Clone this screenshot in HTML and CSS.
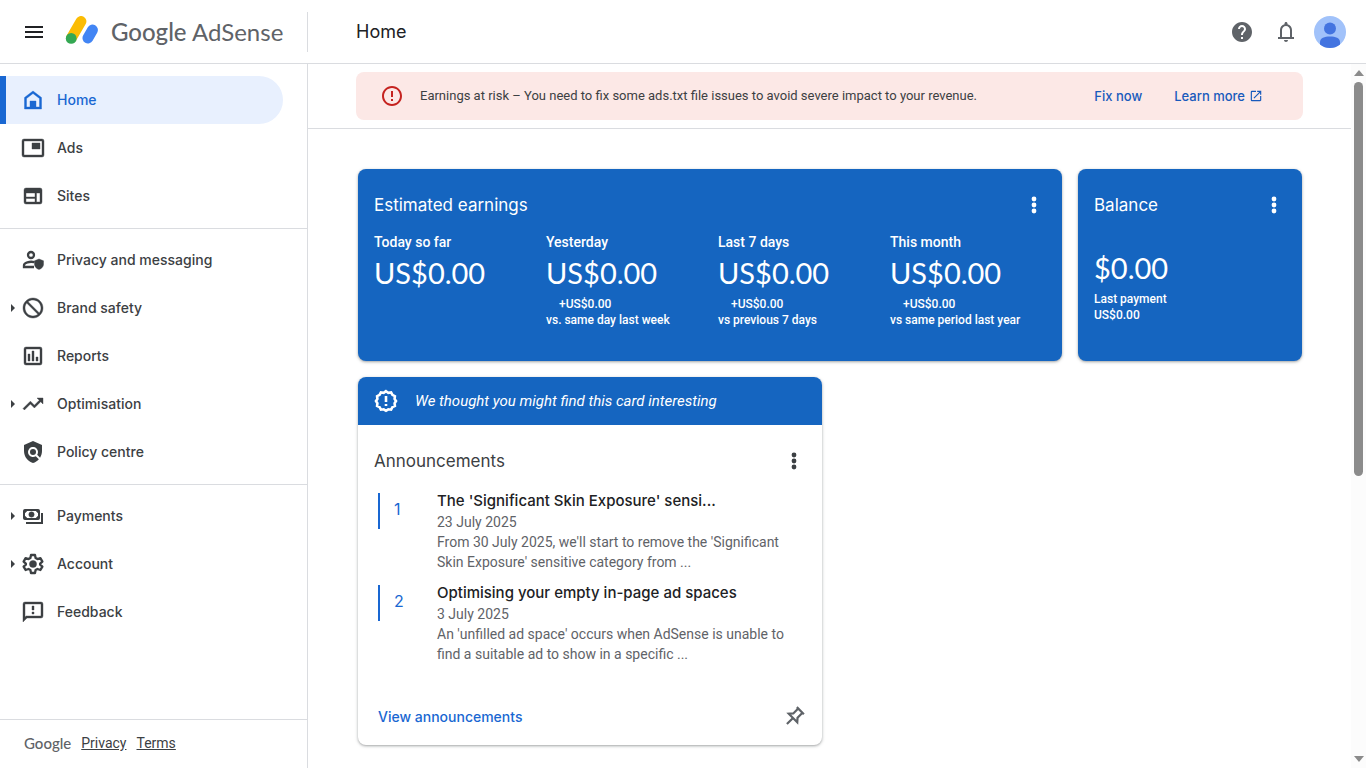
FILE: index.html
```html
<!DOCTYPE html>
<html lang="en-GB">
<head>
<meta charset="utf-8">
<meta name="viewport" content="width=device-width, initial-scale=1">
<title>Google AdSense</title>
<link rel="stylesheet" href="styles.css">
</head>
<body class="app">
<header class="topbar">
  <div class="brand">
    <button class="icon-button" type="button" aria-label="Main menu">
      <svg class="icon" viewBox="0 0 24 24"><path d="M3 6h18v2H3zM3 11h18v2H3zM3 16h18v2H3z"/></svg>
    </button>
    <a class="logo" href="#">
      <svg class="logo-mark" viewBox="0 0 35 32" fill="none" stroke-linecap="round" stroke-width="10.8">
        <path stroke="#fbbc04" d="M17 5.400L7.600 21.600"/>
        <path stroke="#4285f4" d="M28.500 14L23.900 22"/>
        <circle cx="7.200" cy="22.400" r="5.400" fill="#34a853"/>
      </svg>
      <span class="logo-text"><span class="logo-google">Google</span> AdSense</span>
    </a>
  </div>
  <h1 class="page-title">Home</h1>
  <div class="actions">
    <button class="icon-button" type="button" aria-label="Help">
      <svg class="icon" viewBox="0 0 24 24"><path d="M12 2C6.48 2 2 6.48 2 12s4.48 10 10 10 10-4.48 10-10S17.52 2 12 2zm1 17h-2v-2h2v2zm2.07-7.75l-.9.92C13.45 12.9 13 13.5 13 15h-2v-.5c0-1.1.45-2.1 1.17-2.83l1.24-1.26c.37-.36.59-.86.59-1.41 0-1.1-.9-2-2-2s-2 .9-2 2H8c0-2.21 1.79-4 4-4s4 1.79 4 4c0 .88-.36 1.68-.93 2.25z"/></svg>
    </button>
    <button class="icon-button" type="button" aria-label="Notifications">
      <svg class="icon" viewBox="0 0 24 24"><path d="M12 22c1.1 0 2-.9 2-2h-4c0 1.1.9 2 2 2zM18 17v-7c0-2.79-1.91-5.14-4.5-5.8V3.500C13.500 2.670 12.830 2 12 2s-1.500.67-1.500 1.500v.7C7.910 4.860 6 7.210 6 10v7H4v2h16v-2h-2zm-2 0H8v-7c0-2.210 1.790-4 4-4s4 1.790 4 4v7z"/></svg>
    </button>
    <button class="avatar-button" type="button" aria-label="Account profile">
      <svg class="avatar" viewBox="0 0 32 32"><circle cx="16" cy="16" r="16" fill="#a1c2fa"/><circle cx="16" cy="12.500" r="6" fill="#4374e0"/><path fill="#4374e0" d="M6 28.400V26c0-4 4.500-5.600 10-5.600S26 22 26 26v2.400A16 16 0 0 1 6 28.400z"/></svg>
    </button>
  </div>
</header>

<div class="body">
  <aside class="sidebar">
    <nav class="nav" aria-label="Main">
      <ul class="nav-group">
        <li><a class="nav-item nav-item-active" href="#"><span class="caret"></span><svg class="icon" viewBox="0 0 24 24"><path fill-rule="evenodd" d="M12 3l8.500 6.500V21h-17V9.500zM12 5.500L5.500 10.500V19h13v-8.500z"/><path d="M9 13h6v7H9z"/></svg>Home</a></li>
        <li><a class="nav-item" href="#"><span class="caret"></span><svg class="icon" viewBox="0 0 24 24"><path fill-rule="evenodd" d="M3 3h18a2 2 0 0 1 2 2v14a2 2 0 0 1-2 2H3a2 2 0 0 1-2-2V5a2 2 0 0 1 2-2zm0 2v14h18V5zM11 7h8v6h-8z"/></svg>Ads</a></li>
        <li><a class="nav-item" href="#"><span class="caret"></span><svg class="icon" viewBox="0 0 24 24"><path fill-rule="evenodd" d="M5 4h14a2 2 0 0 1 2 2v12a2 2 0 0 1-2 2H5a2 2 0 0 1-2-2V6a2 2 0 0 1 2-2zM5 9v4h9V9zm0 5.500V18h9v-3.500zM15.500 9v9H19V9z"/></svg>Sites</a></li>
      </ul>
      <ul class="nav-group">
        <li><a class="nav-item" href="#"><span class="caret"></span><svg class="icon" viewBox="0 0 24 24"><g fill="none" stroke="currentColor" stroke-width="2.300"><circle cx="10" cy="7" r="3"/><path d="M13.500 14.200C8.500 12.900 3 14.800 3 17.300V19h10"/></g><path d="M18 11l4.500 1.800v3.400c0 2.500-1.900 4.500-4.500 5.300-2.600-.8-4.500-2.800-4.500-5.300v-3.400z"/></svg>Privacy and messaging</a></li>
        <li><a class="nav-item" href="#"><span class="caret caret-shown"></span><svg class="icon" viewBox="0 0 24 24"><path d="M12 2C6.480 2 2 6.480 2 12s4.480 10 10 10 10-4.480 10-10S17.520 2 12 2zm0 18c-4.420 0-8-3.580-8-8 0-1.850.63-3.550 1.690-4.900L16.900 18.310C15.550 19.370 13.850 20 12 20zm6.310-3.100L7.100 5.690C8.450 4.630 10.150 4 12 4c4.420 0 8 3.580 8 8 0 1.850-.63 3.550-1.690 4.900z"/></svg>Brand safety</a></li>
        <li><a class="nav-item" href="#"><span class="caret"></span><svg class="icon" viewBox="0 0 24 24"><path fill-rule="evenodd" d="M5 3h14a2 2 0 0 1 2 2v14a2 2 0 0 1-2 2H5a2 2 0 0 1-2-2V5a2 2 0 0 1 2-2zm0 2v14h14V5zM7 10h2v7H7zM11 7h2v10h-2zM15 13h2v4h-2z"/></svg>Reports</a></li>
        <li><a class="nav-item" href="#"><span class="caret caret-shown"></span><svg class="icon" viewBox="0 0 24 24"><path d="M16 6l2.290 2.290-4.880 4.880-4-4L2 16.590 3.410 18l6-6 4 4 6.300-6.290L22 12V6z"/></svg>Optimisation</a></li>
        <li><a class="nav-item" href="#"><span class="caret"></span><svg class="icon icon-solid" viewBox="0 0 24 24"><path d="M21 5l-9-4-9 4v6c0 5.550 3.840 10.740 9 12 2.300-.56 4.330-1.900 5.880-3.710l-3.120-3.120c-1.940 1.290-4.580 1.070-6.290-.64-1.950-1.950-1.950-5.120 0-7.070 1.950-1.950 5.120-1.950 7.070 0 1.710 1.710 1.920 4.350.64 6.290l2.900 2.900C20.290 15.690 21 13.380 21 11V5z"/><circle cx="12" cy="12" r="3"/></svg>Policy centre</a></li>
      </ul>
      <ul class="nav-group">
        <li><a class="nav-item" href="#"><span class="caret caret-shown"></span><svg class="icon" viewBox="0 0 24 24"><g fill="none" stroke="currentColor" stroke-width="2"><rect x="3" y="6" width="15" height="9" rx="1"/><path d="M5 19h16V9"/></g><circle cx="10.500" cy="10.500" r="2.700"/><path d="M3 6h4L3 10zM18 6h-4l4 4zM3 15h4l-4-4zM18 15h-4l4-4z"/></svg>Payments</a></li>
        <li><a class="nav-item" href="#"><span class="caret caret-shown"></span><svg class="icon" viewBox="0 0 24 24"><path d="M10 3h4l.6 3 1.900 1.100 2.900-1L21.400 9.600l-2.300 2v1l2.300 2-2 3.400-2.900-1-1.900 1.100L14 21h-4l-.6-2.900L7.500 17l-2.900 1-2-3.400 2.300-2v-1l-2.300-2 2-3.500 2.900 1L9.400 6z" fill="none" stroke="currentColor" stroke-width="2.300" stroke-linejoin="round"/><circle cx="12" cy="12" r="3.600"/></svg>Account</a></li>
        <li><a class="nav-item" href="#"><span class="caret"></span><svg class="icon" viewBox="0 0 24 24"><path fill-rule="evenodd" d="M4 2h16a2 2 0 0 1 2 2v12a2 2 0 0 1-2 2H6l-4 4V4a2 2 0 0 1 2-2zm0 2v13l1.200-1H20V4zM11 6h2v4h-2zM11 12h2v2h-2z"/></svg>Feedback</a></li>
      </ul>
    </nav>
    <footer class="legal"><span class="legal-brand">Google</span><a href="#">Privacy</a><a href="#">Terms</a></footer>
  </aside>

  <main class="content">
    <div class="alert-row">
      <div class="alert" role="alert">
        <svg class="icon alert-icon" viewBox="0 0 24 24"><path d="M11 15h2v2h-2zm0-8h2v6h-2zm1-5C6.470 2 2 6.500 2 12s4.470 10 10 10 10-4.480 10-10S17.520 2 12 2zm0 18c-4.420 0-8-3.580-8-8s3.580-8 8-8 8 3.580 8 8-3.580 8-8 8z"/></svg>
        <p class="alert-text">Earnings at risk – You need to fix some ads.txt file issues to avoid severe impact to your revenue.</p>
        <a class="alert-link" href="#">Fix now</a>
        <a class="alert-link" href="#">Learn more <svg class="link-icon" viewBox="0 0 24 24"><path d="M19 19H5V5h7V3H5a2 2 0 0 0-2 2v14a2 2 0 0 0 2 2h14c1.100 0 2-.9 2-2v-7h-2v7zM14 3v2h3.590l-9.830 9.830 1.410 1.410L19 6.410V10h2V3h-7z"/></svg></a>
      </div>
    </div>

    <div class="cards">
      <section class="card card-blue card-earnings">
        <header class="card-head">
          <h2 class="card-title">Estimated earnings</h2>
          <button class="icon-button" type="button" aria-label="Estimated earnings options"><svg class="icon" viewBox="0 0 24 24"><circle cx="12" cy="6" r="2.400"/><circle cx="12" cy="12" r="2.400"/><circle cx="12" cy="18" r="2.400"/></svg></button>
        </header>
        <div class="metrics">
          <div class="metric"><h3 class="metric-label">Today so far</h3><p class="metric-value">US$0.00</p></div>
          <div class="metric"><h3 class="metric-label">Yesterday</h3><p class="metric-value">US$0.00</p><p class="metric-change">+US$0.00</p><p class="metric-note">vs. same day last week</p></div>
          <div class="metric"><h3 class="metric-label">Last 7 days</h3><p class="metric-value">US$0.00</p><p class="metric-change">+US$0.00</p><p class="metric-note">vs previous 7 days</p></div>
          <div class="metric"><h3 class="metric-label">This month</h3><p class="metric-value">US$0.00</p><p class="metric-change">+US$0.00</p><p class="metric-note">vs same period last year</p></div>
        </div>
      </section>

      <section class="card card-blue">
        <header class="card-head">
          <h2 class="card-title">Balance</h2>
          <button class="icon-button" type="button" aria-label="Balance options"><svg class="icon" viewBox="0 0 24 24"><circle cx="12" cy="6" r="2.400"/><circle cx="12" cy="12" r="2.400"/><circle cx="12" cy="18" r="2.400"/></svg></button>
        </header>
        <div class="balance"><p class="metric-value">$0.00</p><p class="metric-note">Last payment</p><p class="metric-note">US$0.00</p></div>
      </section>

      <section class="card card-news">
        <div class="hint">
          <svg class="icon" viewBox="0 0 24 24"><path d="M12 2.200l2.300 1.600 2.800-.4 1.300 2.500 2.500 1.300-.3 2.800L22 12l-1.400 2.200.3 2.700-2.500 1.300-1.300 2.500-2.800-.4L12 21.800l-2.300-1.500-2.800.4-1.300-2.500-2.500-1.300.3-2.700L2 12l1.400-2-.3-2.800 2.500-1.300 1.300-2.500 2.800.4z" fill="none" stroke="currentColor" stroke-width="2.600"/><path d="M10.700 7h2.600v6h-2.600zM10.700 15h2.600v2h-2.600z"/></svg>
          <p class="hint-text">We thought you might find this card interesting</p>
        </div>
        <header class="card-head">
          <h2 class="card-title">Announcements</h2>
          <button class="icon-button" type="button" aria-label="Announcements options"><svg class="icon" viewBox="0 0 24 24"><circle cx="12" cy="6" r="2.400"/><circle cx="12" cy="12" r="2.400"/><circle cx="12" cy="18" r="2.400"/></svg></button>
        </header>
        <ol class="news-list">
          <li class="news"><span class="news-number">1</span><div class="news-body"><h3 class="news-title">The 'Significant Skin Exposure' sensi...</h3><p>23 July 2025</p><p>From 30 July 2025, we'll start to remove the 'Significant Skin Exposure' sensitive category from ...</p></div></li>
          <li class="news"><span class="news-number">2</span><div class="news-body"><h3 class="news-title">Optimising your empty in-page ad spaces</h3><p>3 July 2025</p><p>An 'unfilled ad space' occurs when AdSense is unable to find a suitable ad to show in a specific ...</p></div></li>
        </ol>
        <footer class="news-foot">
          <a class="news-link" href="#">View announcements</a>
          <button class="icon-button pin" type="button" aria-label="Pin card"><svg class="icon" viewBox="0 0 24 24"><g transform="rotate(45 12 12)" fill="none" stroke="currentColor" stroke-width="2.200"><path d="M7 3h10M9 3v7l-3 3.400h12L15 10V3M12 13.400v8.600"/></g></svg></button>
        </footer>
      </section>
    </div>
  </main>
  <div class="scrollbar" aria-hidden="true"><span class="arrow arrow-up"></span><div class="track"><div class="thumb"></div></div><span class="arrow arrow-down"></span></div>
</div>
</body>
</html>
```
FILE: styles.css
```css
* { box-sizing: border-box; }
h1, h2, h3, p, ol, ul { margin: 0; padding: 0; font-weight: 400; }
ul, ol { list-style: none; }
a { color: inherit; text-decoration: none; }
button { border: 0; padding: 0; background: none; color: inherit; cursor: pointer; }
svg { display: block; flex: none; }

.app {
  --display: "Lato", "Liberation Sans", sans-serif;
  --label: "Inter", "Liberation Sans", sans-serif;
  --line: #dadce0;
  --blue: #1967d2;
  display: flex;
  flex-direction: column;
  height: 100vh;
  margin: 0;
  overflow: hidden;
  background: #fff;
  color: #3c4043;
  font: 14px/20px "Roboto", "Liberation Sans", sans-serif;
}

.icon { width: 24px; height: 24px; fill: currentColor; }
.icon-button { display: flex; align-items: center; justify-content: center; width: 24px; height: 24px; }

.topbar { display: flex; align-items: center; flex: none; height: 64px; border-bottom: 1px solid var(--line); }
.brand { display: flex; align-items: center; gap: 18px; width: 308px; height: 40px; padding-left: 22px; border-right: 1px solid var(--line); color: #202124; }
.logo { display: flex; align-items: center; gap: 12px; }
.logo-mark { width: 35px; height: 32px; }
.logo-text { color: #5f6368; font: 24px/32px var(--display); white-space: nowrap; }
.logo-google { font-weight: 500; }
.page-title { flex: 1; padding-left: 48px; color: #202124; font: 18px/24px var(--label); }
.actions { display: flex; align-items: center; gap: 20px; padding-right: 20px; color: #5f6368; }
.avatar-button { margin-left: -4px; }
.avatar { width: 32px; height: 32px; }

.body { display: flex; flex: 1; min-height: 0; }
.sidebar { display: flex; flex: none; flex-direction: column; justify-content: space-between; width: 308px; border-right: 1px solid var(--line); }
.nav { padding-top: 12px; }
.nav-group + .nav-group { margin-top: 8px; padding-top: 7px; border-top: 1px solid var(--line); }
.nav-item { display: flex; align-items: center; height: 48px; margin-right: 24px; padding-left: 11px; font: 500 14px/20px var(--label); }
.nav-item .icon { margin-right: 12px; stroke: currentColor; stroke-width: .4; }
.nav-item .icon-solid { stroke: none; }
.nav-item-active { padding-left: 5px; border-left: 6px solid var(--blue); border-radius: 0 24px 24px 0; background: #e8f0fe; color: var(--blue); }
.caret { width: 10px; }
.caret-shown::before { content: ""; display: block; width: 0; border: 4px solid transparent; border-left-color: currentColor; border-right: 0; }
.legal { display: flex; align-items: center; gap: 10px; height: 49px; padding: 0 0 2px 24px; border-top: 1px solid var(--line); }
.legal a { text-decoration: underline; }
.legal-brand { color: #5f6368; font: 500 15px/20px var(--display); }

.content { flex: 1; min-width: 0; overflow: hidden; }
.alert-row { padding: 8px 48px; border-bottom: 1px solid var(--line); }
.alert { display: flex; align-items: center; gap: 32px; min-height: 48px; padding: 0 40px 0 24px; border-radius: 8px; background: #fce8e6; }
.alert-icon { color: #c5221f; }
.alert-text { flex: 1; margin-left: -16px; font-size: 13px; }
.alert-link { display: flex; align-items: center; gap: 4px; color: #185abc; font: 500 13px/20px var(--label); }
.link-icon { width: 14px; height: 14px; fill: currentColor; }

.cards { display: grid; grid-template-columns: repeat(4, 1fr); gap: 16px; padding: 40px 49px 24px 50px; }
.card { overflow: hidden; border-radius: 8px; background: #fff; box-shadow: 0 1px 2px rgba(60, 64, 67, .3), 0 1px 3px 1px rgba(60, 64, 67, .15); }
.card-blue { min-height: 192px; background: #1565c0; color: #fff; }
.card-earnings { grid-column: span 3; }
.card-news { grid-column: 1 / span 2; }
.card-head { display: flex; align-items: center; justify-content: space-between; padding: 24px 16px 0; }
.card-title { font: 17px/24px var(--label); }
.metrics { display: grid; grid-template-columns: repeat(4, 1fr); padding: 15px 0 0 16px; }
.metric-label { font-size: 14px; font-weight: 500; line-height: 20px; }
.metric-value { padding: 3px 0 5px; font: 29px/36px var(--display); }
.metric-change { padding-left: 13px; font: 500 12px/16px "Roboto", sans-serif; }
.metric-note { font: 500 12px/16px "Roboto", sans-serif; }
.balance { padding: 30px 16px 0; }

.hint { display: flex; align-items: center; gap: 17px; height: 48px; padding-left: 16px; background: #1565c0; color: #fff; }
.hint-text { font-size: 15px; font-style: italic; }
.news-list { display: grid; gap: 10px; padding: 17px 20px 0; }
.news { display: flex; gap: 21px; color: #5f6368; }
.news-number { flex: none; width: 38px; height: 36px; margin-top: 3px; padding-left: 14px; border-left: 2px solid var(--blue); color: var(--blue); font: 16px/32px var(--label); }
.news-title { color: #202124; font: 500 15px/22px var(--label); }
.news-foot { display: flex; align-items: center; justify-content: space-between; padding: 41px 16px 16px 20px; }
.news-link { color: var(--blue); font: 500 14px/24px var(--label); }
.pin { color: #5f6368; }

.scrollbar { display: flex; flex: none; flex-direction: column; align-items: center; width: 15px; padding: 6px 0; background: #fcfcfc; }
.arrow { width: 0; border: 5px solid transparent; }
.arrow-up { border-top: 0; border-bottom: 6px solid #8b8b8b; }
.arrow-down { border-bottom: 0; border-top: 6px solid #8b8b8b; }
.track { flex: 1; width: 9px; padding: 6px 0; }
.thumb { height: 59%; border-radius: 5px; background: #8b8b8b; }
```
